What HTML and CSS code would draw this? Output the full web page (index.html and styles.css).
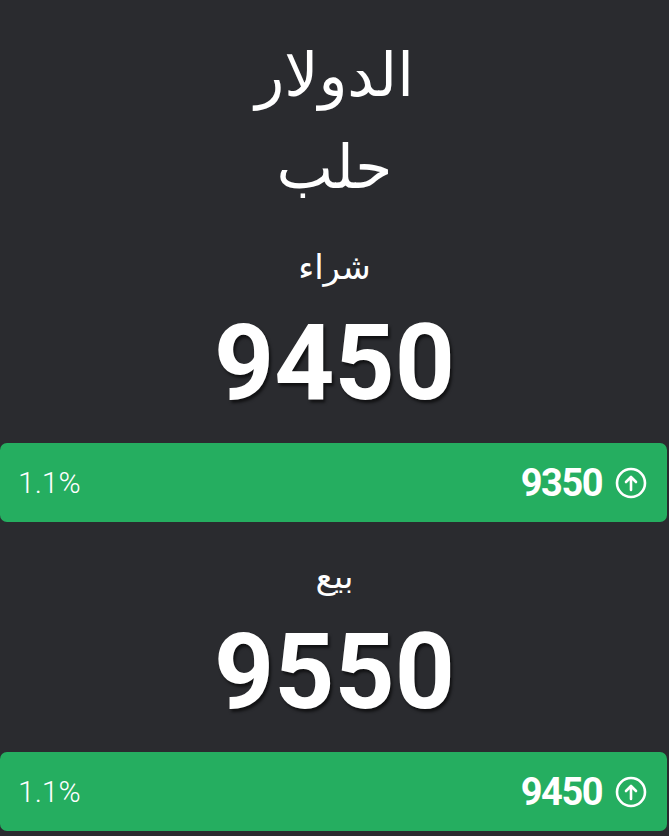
FILE: index.html
```html
<!DOCTYPE html>
<html lang="ar" dir="rtl">
<head>
    <meta charset="UTF-8">
    <meta name="viewport" content="width=device-width, initial-scale=1.0">
    <title>الدولار حلب</title>
    <link rel="stylesheet" href="styles.css">
</head>
<body>
    <div class="page">
        <div class="header">
            <h1 class="currency">الدولار</h1>
            <h2 class="city">حلب</h2>
        </div>

        <div class="price-block">
            <div class="label">شراء</div>
            <div class="price">9450</div>
        </div>
        <div class="change-bar">
            <div class="prev">
                <svg class="arrow" viewBox="0 0 32 32" width="32" height="32">
                    <circle cx="16" cy="16" r="14" fill="none" stroke="#fff" stroke-width="2.6"/>
                    <path d="M16 23 V10 M11 15 L16 10 L21 15" fill="none" stroke="#fff" stroke-width="2.6" stroke-linecap="round" stroke-linejoin="round"/>
                </svg>
                <span>9350</span>
            </div>
            <div class="percent">1.1%</div>
        </div>

        <div class="price-block">
            <div class="label">بيع</div>
            <div class="price">9550</div>
        </div>
        <div class="change-bar">
            <div class="prev">
                <svg class="arrow" viewBox="0 0 32 32" width="32" height="32">
                    <circle cx="16" cy="16" r="14" fill="none" stroke="#fff" stroke-width="2.6"/>
                    <path d="M16 23 V10 M11 15 L16 10 L21 15" fill="none" stroke="#fff" stroke-width="2.6" stroke-linecap="round" stroke-linejoin="round"/>
                </svg>
                <span>9450</span>
            </div>
            <div class="percent">1.1%</div>
        </div>
    </div>
</body>
</html>
```

FILE: styles.css
```css
html, body {
    margin: 0;
    padding: 0;
    background-color: #2a2b2f;
    color: #ffffff;
}
body {
    font-family: "DejaVu Sans", sans-serif;
}
.page {
    width: 669px;
    height: 836px;
    overflow: hidden;
}
.header {
    text-align: center;
    padding-top: 29px;
}
.currency, .city {
    margin: 0;
    font-weight: normal;
    font-size: 60px;
    line-height: 92px;
}
.price-block {
    text-align: center;
    padding-top: 29px;
}
.label {
    font-size: 34px;
    line-height: 50px;
}
.price {
    font-family: Roboto, sans-serif;
    font-weight: bold;
    font-size: 105px;
    line-height: 120px;
    margin-top: 12px;
    margin-bottom: 19px;
    text-shadow: 2px 3px 3px rgba(0, 0, 0, 0.6);
}
.change-bar {
    display: flex;
    justify-content: space-between;
    align-items: center;
    height: 79px;
    margin-right: 2px;
    padding: 0 20px 0 18px;
    background-color: #25ae60;
    border-radius: 7px;
    font-family: Roboto, sans-serif;
}
.prev {
    display: flex;
    align-items: center;
    gap: 13px;
    font-weight: bold;
    font-size: 38px;
    letter-spacing: -1.5px;
}
.percent {
    font-weight: 300;
    font-size: 30px;
}
```
